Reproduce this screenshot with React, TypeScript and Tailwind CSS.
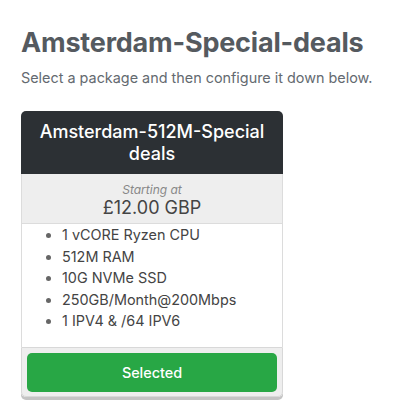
import React from 'react';

const features = [
    '1 vCORE Ryzen CPU',
    '512M RAM',
    '10G NVMe SSD',
    '250GB/Month@200Mbps',
    '1 IPV4 & /64 IPV6',
];

const App: React.FC = () => {
    return (
        <div className="min-h-[411px] w-[400px] bg-white px-[21px] pt-[26px] font-['Inter',sans-serif]">
            <h1 className="text-[27px] font-bold leading-[34px] tracking-[-0.2px] text-[#555a5f]">Amsterdam-Special-deals</h1>
            <p className="mt-[8px] text-[14.4px] leading-[20px] text-[#646a70]">Select a package and then configure it down below.</p>

            <div className="mt-[23px] w-[262px] rounded-[5px] shadow-[0_3px_0_#c4c4c4]">
                <div className="rounded-t-[5px] bg-[#2c3034] px-3 pb-[9px] pt-[10px] text-center text-[18px] font-medium leading-[22px] text-white">
                    Amsterdam-512M-Special deals
                </div>
                <div className="border-x border-b border-[#dcdcdc] bg-[#eeeeee] pb-[4px] pt-[8px] text-center">
                    <div className="text-[12px] italic leading-[15px] text-[#888]">Starting at</div>
                    <div className="text-[18px] leading-[22px] text-[#444]">£12.00 GBP</div>
                </div>
                <ul className="list-disc border-x border-[#dcdcdc] bg-white pb-[15px] pl-[40px] text-[14.4px] leading-[21.6px] text-[#444] marker:text-[#666]">
                    {features.map(f => (
                        <li key={f}>{f}</li>
                    ))}
                </ul>
                <div className="rounded-b-[5px] border border-[#d8d8d8] bg-[#eeeeee] px-[5px] pb-[4px] pt-[5px]">
                    <button className="h-[39px] w-full rounded-[5px] bg-[#28a745] text-[14.4px] font-medium text-white">Selected</button>
                </div>
            </div>
        </div>
    );
};

export default App;
